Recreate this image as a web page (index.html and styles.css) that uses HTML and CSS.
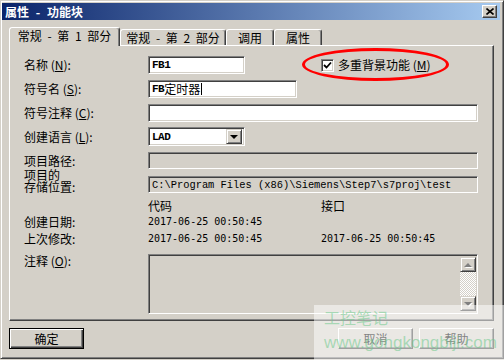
FILE: index.html
```html
<!DOCTYPE html>
<html lang="zh">
<head>
<meta charset="utf-8">
<title>属性 - 功能块</title>
<link rel="stylesheet" href="styles.css">
</head>
<body>
<div class="win">
  <div class="titlebar">
    <span class="title">属性 - 功能块</span>
    <span class="close"><svg width="8" height="7" viewBox="0 0 8 7"><path d="M0.5 0.5 L7.5 6.5 M7.5 0.5 L0.5 6.5" stroke="#000" stroke-width="1.6" fill="none"/></svg></span>
  </div>
  <div class="main">
    <div class="tabs">
      <div class="tab sel t1">常规 - 第 1 部分</div>
      <div class="tab t2">常规 - 第 2 部分</div>
      <div class="tab t3">调用</div>
      <div class="tab t3">属性</div>
    </div>
    <div class="panel">
      <div class="row r1">
        <span class="lbl">名称 (<u>N</u>):</span>
        <div class="line">
          <div class="field w97"><span class="mono-b">FB1</span></div>
          <div class="chk">
            <span class="box"><svg width="9" height="9" viewBox="0 0 9 9"><path d="M1 4 L3.5 6.5 L8 1.5" stroke="#000" stroke-width="1.8" fill="none"/></svg></span>
            <span>多重背景功能 (<u>M</u>)</span>
          </div>
        </div>
      </div>
      <div class="row r2">
        <span class="lbl">符号名 (<u>S</u>):</span>
        <div class="field w149"><span class="mono-b">FB</span><span>定时器</span><span class="caret"></span></div>
      </div>
      <div class="row r3">
        <span class="lbl">符号注释 (<u>C</u>):</span>
        <div class="field w330"></div>
      </div>
      <div class="row r4">
        <span class="lbl">创建语言 (<u>L</u>):</span>
        <div class="field w97 sel-field"><span class="mono-b">LAD</span><span class="dd"><span class="tri-down"></span></span></div>
      </div>
      <div class="row r5">
        <span class="lbl">项目路径:</span>
        <div class="field w330 dis h17"></div>
      </div>
      <div class="row r6">
        <span class="lbl two">项目的<br>存储位置:</span>
        <div class="field w330 dis h17 end"><span class="mono">C:\Program Files (x86)\Siemens\Step7\s7proj\test</span></div>
      </div>
      <div class="row3 r7">
        <span></span>
        <span>代码</span>
        <span>接口</span>
      </div>
      <div class="row3 r8">
        <span class="lbl">创建日期:</span>
        <span class="date">2017-06-25 00:50:45</span>
        <span></span>
      </div>
      <div class="row3 r9">
        <span class="lbl">上次修改:</span>
        <span class="date">2017-06-25 00:50:45</span>
        <span class="date">2017-06-25 00:50:45</span>
      </div>
      <div class="row r10">
        <span class="lbl top">注释 (<u>O</u>):</span>
        <div class="field w330 dis ta">
          <div class="sb">
            <span class="sbtn"><span class="tri-up g"></span></span>
            <span class="track"></span>
            <span class="sbtn"><span class="tri-down g"></span></span>
          </div>
        </div>
      </div>
    </div>
    <div class="btns">
      <div class="btn def">确定</div>
      <div class="btn">取消</div>
      <div class="btn">帮助</div>
    </div>
  </div>
  <div class="ellipse"></div>
  <div class="watermark">
    <div class="wm1">工控笔记</div>
    <div class="wm2">www.gongkongbiji.com</div>
  </div>
</div>
</body>
</html>
```
FILE: styles.css
```css
* { box-sizing: border-box; }
html, body { margin: 0; padding: 0; }
body {
  background: #d4d0c8;
  font-family: "Noto Sans CJK SC", "Noto Sans", sans-serif;
  font-size: 12px;
  line-height: 14px;
  color: #000;
  width: 504px;
  height: 360px;
  overflow: hidden;
}
u { text-decoration: underline; text-underline-offset: 1px; }

.win {
  position: relative;
  width: 504px;
  height: 359px;
  background: #d4d0c8;
  border: 1px solid;
  border-color: #d4d0c8 #404040 #404040 #d4d0c8;
  box-shadow: inset 1px 1px #fff, inset -1px -1px #808080;
  padding: 2px 3px 2px 1px;
}

.titlebar {
  height: 17px;
  background: linear-gradient(to right, #0a246a, #a6caf0);
  display: flex;
  align-items: center;
  justify-content: space-between;
  padding: 0 3px 0 3px;
}
.title {
  color: #fff;
  font-weight: bold;
  line-height: 14px;
  white-space: pre;
  word-spacing: 4px;
}
.close {
  width: 15px;
  height: 13px;
  background: #d4d0c8;
  border: 1px solid;
  border-color: #fff #404040 #404040 #fff;
  box-shadow: inset -1px -1px #808080;
  display: flex;
  align-items: center;
  justify-content: center;
}

.main { padding: 7px 6px 0 7px; }

.tabs {
  display: flex;
  align-items: flex-end;
  height: 18px;
  position: relative;
  z-index: 1;
}
.tab {
  height: 16px;
  border: 1px solid;
  border-bottom: none;
  border-color: #fff #404040 transparent #fff;
  box-shadow: inset -1px 0 #808080;
  border-radius: 3px 3px 0 0;
  background: #d4d0c8;
  display: flex;
  align-items: center;
  justify-content: center;
  white-space: pre;
  word-spacing: 3px;
}
.tab.sel { height: 19px; margin-bottom: -1px; padding-bottom: 2px; }
.t1 { width: 111px; }
.t2 { width: 106px; }
.t3 { width: 48px; }

.panel {
  height: 276px;
  border: 1px solid;
  border-color: #fff #404040 #404040 #fff;
  box-shadow: inset -1px -1px #808080;
  padding: 10px 0 0 14px;
}

.row {
  display: grid;
  grid-template-columns: 124px auto;
  align-items: center;
}
.row3 {
  display: grid;
  grid-template-columns: 124px 173px auto;
  align-items: center;
  height: 14px;
}
.r1 { height: 18px; }
.r2 { height: 18px; margin-top: 6px; }
.r3 { height: 18px; margin-top: 6px; }
.r4 { height: 19px; margin-top: 5px; }
.r5 { height: 17px; margin-top: 6px; }
.r6 { height: 24px; margin-top: 0; align-items: end; }
.r7 { margin-top: 6px; }
.r8 { margin-top: 2px; }
.r9 { margin-top: 3px; }
.r10 { height: 60px; margin-top: 8px; align-items: start; }

.lbl { white-space: pre; }
.lbl.two { line-height: 12px; }
.lbl.top { line-height: 14px; }

.line { display: flex; align-items: center; }

.field {
  height: 18px;
  background: #fff;
  border: 1px solid;
  border-color: #808080 #fff #fff #808080;
  box-shadow: inset 1px 1px #404040, inset -1px -1px #d4d0c8;
  padding: 0 2px 0 3px;
  display: flex;
  align-items: center;
}
.field.h17 { height: 17px; }
.field.dis { background: #d4d0c8; }
.w97 { width: 97px; }
.w149 { width: 149px; }
.w330 { width: 330px; }

.mono-b {
  font-family: "Liberation Mono", monospace;
  font-weight: bold;
  font-size: 11px;
  letter-spacing: -0.5px;
}
.mono {
  font-family: "Liberation Mono", monospace;
  font-size: 10.4px;
  white-space: pre;
}
.date {
  font-family: "DejaVu Sans Mono", monospace;
  font-size: 10px;
  white-space: pre;
}
.caret {
  display: inline-block;
  width: 1px;
  height: 12px;
  background: #000;
  margin-left: 1px;
}

.sel-field { height: 19px; justify-content: space-between; padding-right: 2px; }
.dd {
  width: 16px;
  height: 15px;
  background: #d4d0c8;
  border: 1px solid;
  border-color: #d4d0c8 #404040 #404040 #d4d0c8;
  box-shadow: inset 1px 1px #fff, inset -1px -1px #808080;
  display: flex;
  align-items: center;
  justify-content: center;
}
.tri-down {
  width: 0;
  height: 0;
  border-left: 4px solid transparent;
  border-right: 4px solid transparent;
  border-top: 4px solid #000;
}
.tri-up {
  width: 0;
  height: 0;
  border-left: 4px solid transparent;
  border-right: 4px solid transparent;
  border-bottom: 4px solid #000;
}
.tri-down.g { border-top-color: #808080; filter: drop-shadow(1px 1px 0 #fff); }
.tri-up.g { border-bottom-color: #808080; filter: drop-shadow(1px 1px 0 #fff); }

.chk {
  display: flex;
  align-items: center;
  margin-left: 76px;
  gap: 4px;
  white-space: pre;
}
.box {
  width: 13px;
  height: 13px;
  background: #fff;
  border: 1px solid;
  border-color: #808080 #fff #fff #808080;
  box-shadow: inset 1px 1px #404040, inset -1px -1px #d4d0c8;
  display: flex;
  align-items: center;
  justify-content: center;
}

.ta {
  height: 60px;
  align-items: stretch;
  justify-content: flex-end;
  padding: 2px 1px 2px 2px;
}
.sb {
  width: 16px;
  display: flex;
  flex-direction: column;
}
.sbtn {
  width: 16px;
  height: 15px;
  background: #d4d0c8;
  border: 1px solid;
  border-color: #d4d0c8 #404040 #404040 #d4d0c8;
  box-shadow: inset 1px 1px #fff, inset -1px -1px #808080;
  display: flex;
  align-items: center;
  justify-content: center;
}
.track {
  flex: 1;
  background: repeating-conic-gradient(#fff 0 25%, #d4d0c8 0 50%) 0 0 / 2px 2px;
}

.btns {
  display: flex;
  gap: 6px;
  margin-top: 7px;
}
.btn {
  width: 75px;
  height: 21px;
  background: #d4d0c8;
  border: 1px solid;
  border-color: #fff #404040 #404040 #fff;
  box-shadow: inset -1px -1px #808080;
  display: flex;
  align-items: center;
  justify-content: center;
}
.btn.def {
  margin-right: auto;
  border-color: #000;
  box-shadow: inset 1px 1px #fff, inset -1px -1px #404040, inset -2px -2px #808080;
}

.ellipse {
  position: absolute;
  left: 301px;
  top: 47px;
  width: 147px;
  height: 33px;
  border: 3px solid #f00;
  border-radius: 50%;
}

.watermark {
  position: absolute;
  left: 313px;
  top: 304px;
  width: 191px;
  height: 56px;
  background: rgba(255, 255, 255, 0.5);
  padding: 2px 0 0 10px;
}
.wm1 {
  font-size: 16px;
  line-height: 20px;
  color: rgba(110, 200, 140, 0.55);
}
.wm2 {
  font-family: "Liberation Sans", sans-serif;
  font-size: 17px;
  line-height: 22px;
  margin-top: 5px;
  color: rgba(110, 200, 140, 0.55);
}
```
